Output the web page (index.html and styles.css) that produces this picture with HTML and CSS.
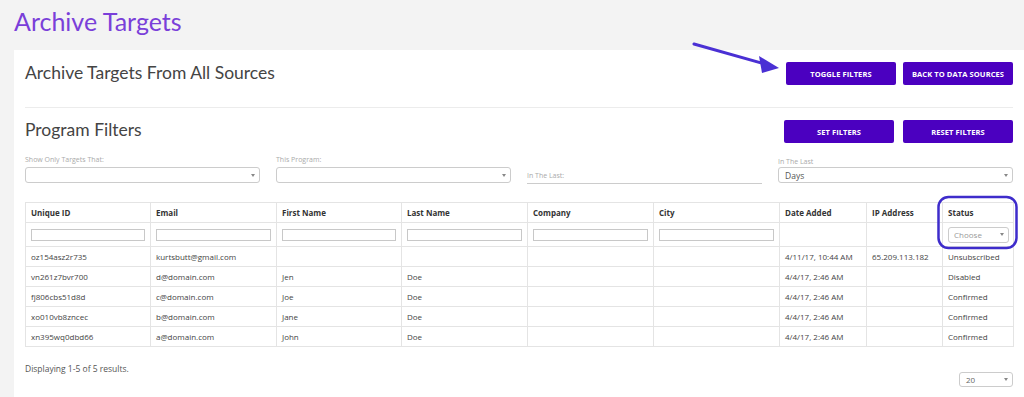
FILE: index.html
```html
<!DOCTYPE html>
<html>
<head>
<meta charset="utf-8">
<link rel="stylesheet" href="styles.css">
</head>
<body>
<h1 class="page-title">Archive Targets</h1>
<div class="panel">
  <div class="head-row">
    <h2 class="section-title">Archive Targets From All Sources</h2>
    <div class="btns">
      <button class="btn">TOGGLE FILTERS</button>
      <button class="btn">BACK TO DATA SOURCES</button>
    </div>
  </div>
  <div class="divider"></div>
  <div class="head-row second">
    <h2 class="section-title">Program Filters</h2>
    <div class="btns">
      <button class="btn">SET FILTERS</button>
      <button class="btn">RESET FILTERS</button>
    </div>
  </div>
  <div class="filters">
    <div class="field">
      <label class="lbl">Show Only Targets That:</label>
      <div class="sel"><span></span><i class="caret"></i></div>
    </div>
    <div class="field">
      <label class="lbl">This Program:</label>
      <div class="sel"><span></span><i class="caret"></i></div>
    </div>
    <div class="field">
      <label class="lbl">&nbsp;</label>
      <div class="line-input">In The Last:</div>
    </div>
    <div class="field">
      <label class="lbl">In The Last</label>
      <div class="sel dark"><span>Days</span><i class="caret"></i></div>
    </div>
  </div>
  <table class="grid">
    <colgroup>
      <col style="width:125px"><col style="width:126px"><col style="width:125px"><col style="width:126px"><col style="width:126px"><col style="width:126px"><col style="width:87px"><col style="width:76px"><col style="width:71px">
    </colgroup>
    <thead>
      <tr class="hdr">
        <th>Unique ID</th><th>Email</th><th>First Name</th><th>Last Name</th><th>Company</th><th>City</th><th>Date Added</th><th>IP Address</th><th>Status</th>
      </tr>
      <tr class="frow">
        <td><div class="tin"></div></td><td><div class="tin"></div></td><td><div class="tin"></div></td><td><div class="tin"></div></td><td><div class="tin"></div></td><td><div class="tin"></div></td><td></td><td></td>
        <td><div class="sel small"><span>Choose</span><i class="caret"></i></div></td>
      </tr>
    </thead>
    <tbody>
      <tr><td>oz154asz2r735</td><td>kurtsbutt@gmail.com</td><td></td><td></td><td></td><td></td><td>4/11/17, 10:44 AM</td><td>65.209.113.182</td><td>Unsubscribed</td></tr>
      <tr><td>vn261z7bvr700</td><td>d@domain.com</td><td>Jen</td><td>Doe</td><td></td><td></td><td>4/4/17, 2:46 AM</td><td></td><td>Disabled</td></tr>
      <tr><td>fj806cbs51d8d</td><td>c@domain.com</td><td>Joe</td><td>Doe</td><td></td><td></td><td>4/4/17, 2:46 AM</td><td></td><td>Confirmed</td></tr>
      <tr><td>xo010vb8zncec</td><td>b@domain.com</td><td>Jane</td><td>Doe</td><td></td><td></td><td>4/4/17, 2:46 AM</td><td></td><td>Confirmed</td></tr>
      <tr><td>xn395wq0dbd66</td><td>a@domain.com</td><td>John</td><td>Doe</td><td></td><td></td><td>4/4/17, 2:46 AM</td><td></td><td>Confirmed</td></tr>
    </tbody>
  </table>
  <div class="footer">
    <div class="count">Displaying 1-5 of 5 results.</div>
    <div class="sel pager"><span>20</span><i class="caret"></i></div>
  </div>
</div>
<svg class="annot" width="1024" height="397" viewBox="0 0 1024 397">
  <line x1="694" y1="44" x2="765" y2="64" stroke="#4a30d4" stroke-width="3" stroke-linecap="round"/>
  <polygon points="779,68 759,56 762,73" fill="#4a30d4"/>
  <rect x="938.5" y="197" width="78" height="51" rx="10" ry="10" fill="none" stroke="#3e2ccb" stroke-width="2.5"/>
</svg>
</body>
</html>
```
FILE: styles.css
```css
html, body {
  margin: 0;
  padding: 0;
}
body {
  background: #f3f3f3;
  font-family: "Open Sans", "Liberation Sans", sans-serif;
  color: #444;
  width: 1024px;
  height: 397px;
  overflow: hidden;
  position: relative;
}
.page-title {
  margin: 0;
  padding: 6px 0 0 14px;
  height: 45px;
  box-sizing: border-box;
  font-family: Lato, "Open Sans", sans-serif;
  font-weight: 400;
  font-size: 25px;
  line-height: 30px;
  color: #7a3fd9;
}
.panel {
  margin-left: 14px;
  margin-top: 5px;
  background: #fff;
  padding: 12px 11px 10px 11px;
  width: 988px;
  height: 340px;
}
.head-row {
  display: flex;
  justify-content: space-between;
  align-items: flex-start;
  height: 45px;
}
.head-row.second {
  margin-top: 12px;
  height: 35px;
}
.section-title {
  margin: 0;
  font-family: Lato, "Open Sans", sans-serif;
  font-weight: 400;
  font-size: 17.5px;
  line-height: 20px;
  color: #444;
  padding-top: 1px;
}
.head-row.second .section-title {
  padding-top: 0;
}
.btns {
  display: flex;
  gap: 7px;
}
.head-row.second .btns {
  gap: 9px;
}
.btn {
  width: 110px;
  height: 23px;
  border: 0;
  border-radius: 2px;
  background: #4b00c0;
  color: #fff;
  font-family: "Open Sans", sans-serif;
  font-weight: 700;
  font-size: 7.5px;
  letter-spacing: 0.1px;
  padding: 0;
}
.divider {
  height: 1px;
  background: #ececec;
}
.filters {
  display: grid;
  grid-template-columns: repeat(4, 235px);
  column-gap: 16px;
}
.field {
  display: flex;
  flex-direction: column;
}
.lbl {
  font-size: 7px;
  line-height: 10px;
  color: #aaa;
  height: 10px;
  margin-bottom: 2px;
}
.field:nth-child(4) .lbl {
  margin-top: 2px;
  margin-bottom: 0;
}
.sel {
  height: 16px;
  border: 1px solid #ccc;
  border-radius: 3px;
  box-sizing: border-box;
  display: flex;
  align-items: center;
  justify-content: space-between;
  padding: 0 4px 0 6px;
  font-size: 8px;
  color: #999;
  background: #fff;
}
.sel.dark {
  color: #555;
  font-size: 8.5px;
}
.caret {
  width: 0;
  height: 0;
  border-left: 2.5px solid transparent;
  border-right: 2.5px solid transparent;
  border-top: 3px solid #888;
}
.line-input {
  margin-top: 2px;
  height: 15px;
  border-bottom: 1px solid #ccc;
  font-size: 7px;
  color: #aaa;
  line-height: 14px;
  box-sizing: border-box;
}
.grid {
  margin-top: 18px;
  border-collapse: collapse;
  table-layout: fixed;
  width: 988px;
  font-size: 8px;
  color: #444;
}
.grid tr {
  height: 20px;
}
.grid tr.frow {
  height: 24px;
}
.grid th, .grid td {
  border: 1px solid #e4e4e4;
  text-align: left;
  padding: 0 0 0 5px;
  white-space: nowrap;
  overflow: hidden;
}
.grid th {
  font-weight: 700;
  color: #333;
}
.frow td {
  padding: 0 5px;
}
.tin {
  height: 12px;
  border: 1px solid #c8c8c8;
  box-sizing: border-box;
  background: #fff;
}
.sel.small {
  height: 16px;
  width: 61px;
  font-size: 8px;
  color: #999;
  padding: 0 4px 0 5px;
}
.footer {
  display: flex;
  justify-content: space-between;
  align-items: flex-start;
  margin-top: 16px;
}
.count {
  font-size: 8.5px;
  color: #555;
  line-height: 12px;
}
.sel.pager {
  width: 54px;
  height: 15px;
  margin-top: 9px;
  font-size: 8px;
  color: #666;
}
.annot {
  position: absolute;
  left: 0;
  top: 0;
  pointer-events: none;
}
```
